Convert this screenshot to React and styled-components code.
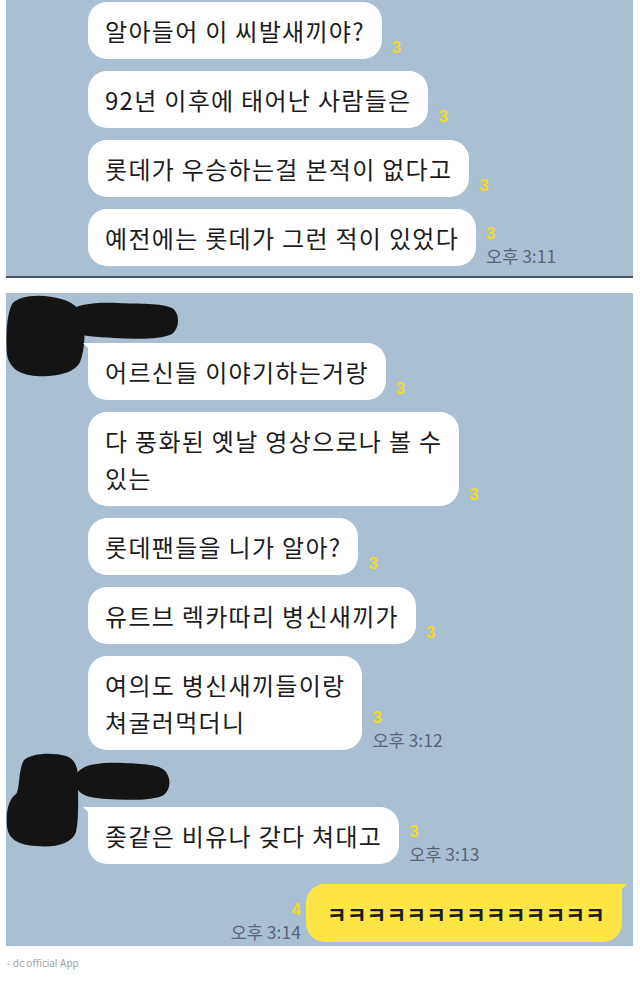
import React from "react";
import styled, { createGlobalStyle } from "styled-components";

const Global = createGlobalStyle`
  html, body { margin: 0; padding: 0; background: #ffffff; }
  body { font-family: "Noto Sans CJK KR", "Noto Sans", sans-serif; }
`;

const Page = styled.div`
  width: 640px;
  padding: 0 7px 0 6px;
  box-sizing: border-box;
  display: flex;
  flex-direction: column;
`;

const Panel = styled.div`
  background: #abbfd3;
  display: flex;
  flex-direction: column;
  gap: ${(p) => p.$gap || 0}px;
  padding: ${(p) => p.$pad};
  border-bottom: ${(p) => (p.$line ? "2px solid #4b5663" : "none")};
  margin-bottom: ${(p) => p.$mb || 0}px;
`;

const Group = styled.div`
  position: relative;
  display: flex;
  flex-direction: column;
  gap: 12px;
  padding-left: 82px;
  margin-top: ${(p) => p.$mt || 0}px;
`;

const NameRow = styled.div`
  height: 33px;
`;

const Redaction = styled.svg`
  position: absolute;
  left: 0;
  top: ${(p) => p.$top}px;
`;

const Row = styled.div`
  display: flex;
  align-items: flex-end;
  justify-content: ${(p) => (p.$mine ? "flex-end" : "flex-start")};
  padding-right: ${(p) => (p.$mine ? 11 : 0)}px;
`;

const Bubble = styled.div`
  position: relative;
  background: ${(p) => (p.$mine ? "#fce545" : "#ffffff")};
  color: #1c1c1c;
  font-size: 24px;
  line-height: 37px;
  letter-spacing: 1.3px;
  padding: ${(p) => (p.$mine ? "10px 17px 10px 21px" : "10px 17px 10px 17px")};
  border-radius: 19px;
  white-space: pre-line;
  ${(p) =>
    p.$tail &&
    (p.$mine
      ? `border-top-right-radius: 6px;
         &::before {
           content: "";
           position: absolute;
           right: -5px;
           top: 0;
           width: 11px;
           height: 11px;
           background: #fce545;
           clip-path: polygon(0 0, 100% 0, 0 100%);
         }`
      : `border-top-left-radius: 6px;
         &::before {
           content: "";
           position: absolute;
           left: -5px;
           top: 0;
           width: 11px;
           height: 11px;
           background: #ffffff;
           clip-path: polygon(0 0, 100% 0, 100% 100%);
         }`)}
`;

const KText = styled.span`
  font-size: 21.6px;
  font-weight: 700;
  letter-spacing: 0;
`;

const Meta = styled.div`
  display: flex;
  flex-direction: column;
  align-items: ${(p) => (p.$mine ? "flex-end" : "flex-start")};
  margin: ${(p) => (p.$mine ? "0 5px 0 0" : "0 0 0 10px")};
  padding-bottom: ${(p) => (p.$time ? 0 : 3)}px;
`;

const Unread = styled.span`
  font-family: "Liberation Sans", "Noto Sans", sans-serif;
  font-size: 17px;
  font-weight: 700;
  line-height: 17px;
  color: #f0da2a;
`;

const Time = styled.span`
  font-size: 17.5px;
  line-height: 20px;
  margin-top: 4px;
  color: #596474;
  white-space: nowrap;
`;

const Footer = styled.div`
  font-family: "Noto Sans", sans-serif;
  font-size: 10px;
  line-height: 14px;
  color: #a3a3a3;
  margin-top: 10px;
  padding-left: 1px;
`;

function Message({ text, count, time, tail, mine, children }) {
  const meta = (
    <Meta $mine={mine} $time={!!time}>
      <Unread>{count}</Unread>
      {time && <Time>{time}</Time>}
    </Meta>
  );
  return (
    <Row $mine={mine}>
      {mine && meta}
      <Bubble $tail={tail} $mine={mine}>
        {children || text}
      </Bubble>
      {!mine && meta}
    </Row>
  );
}

function BlobOne() {
  return (
    <Redaction $top={-4} width="176" height="84" viewBox="0 0 176 84">
      <path
        fill="#141414"
        d="M6 10 C12 2 30 0 46 3 C60 5 72 10 76 22 C80 36 79 56 74 68 C68 80 48 83 30 82 C14 81 3 74 1 60 C0 44 0 22 6 10 Z"
      />
      <path
        fill="#141414"
        d="M62 18 C70 10 90 8 112 9 C132 10 156 9 166 14 C174 19 174 34 166 40 C154 46 128 45 108 44 C92 43 74 42 66 38 C58 33 56 24 62 18 Z"
      />
    </Redaction>
  );
}

function BlobTwo() {
  return (
    <Redaction $top={-12} width="168" height="100" viewBox="0 0 168 100">
      <path
        fill="#141414"
        d="M18 10 C26 3 46 2 60 6 C70 9 73 20 72 34 C72 50 73 68 70 82 C66 94 48 98 30 96 C14 95 2 90 1 76 C0 62 2 50 10 44 C14 40 12 20 18 10 Z"
      />
      <path
        fill="#141414"
        d="M72 22 C78 14 96 12 118 13 C136 14 154 14 160 22 C166 30 164 42 156 46 C144 51 118 50 100 49 C86 48 76 46 72 40 C68 34 68 28 72 22 Z"
      />
    </Redaction>
  );
}

export default function App() {
  return (
    <>
      <Global />
      <Page>
        <Panel $gap={12} $pad="2px 0 10px 82px" $line $mb={15}>
          <Message text="알아들어 이 씨발새끼야?" count="3" />
          <Message text="92년 이후에 태어난 사람들은" count="3" />
          <Message text="롯데가 우승하는걸 본적이 없다고" count="3" />
          <Message text="예전에는 롯데가 그런 적이 있었다" count="3" time="오후 3:11" />
        </Panel>
        <Panel $pad="5px 0 4px 0">
          <Group>
            <NameRow />
            <BlobOne />
            <Message text="어르신들 이야기하는거랑" count="3" tail />
            <Message text={"다 풍화된 옛날 영상으로나 볼 수\n있는"} count="3" />
            <Message text="롯데팬들을 니가 알아?" count="3" />
            <Message text="유트브 렉카따리 병신새끼가" count="3" />
            <Message text={"여의도 병신새끼들이랑\n쳐굴러먹더니"} count="3" time="오후 3:12" />
          </Group>
          <Group $mt={12}>
            <NameRow />
            <BlobTwo />
            <Message text="좆같은 비유나 갖다 쳐대고" count="3" time="오후 3:13" tail />
          </Group>
          <Group $mt={20}>
            <Message mine tail count="4" time="오후 3:14">
              <KText>ㅋㅋㅋㅋㅋㅋㅋㅋㅋㅋㅋㅋㅋㅋ</KText>
            </Message>
          </Group>
        </Panel>
        <Footer>- dc official App</Footer>
      </Page>
    </>
  );
}
